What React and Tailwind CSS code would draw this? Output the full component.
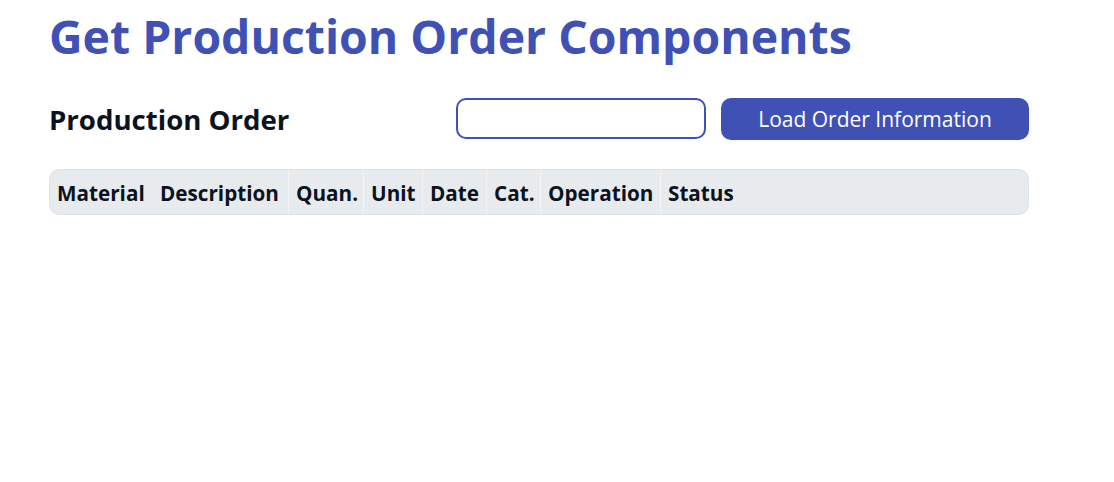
export default function App() {
  const cols = [
    ["Material", "w-[103px]"],
    ["Description", "w-[136px]"],
    ["Quan.", "w-[75px]"],
    ["Unit", "w-[59px]"],
    ["Date", "w-[64px]"],
    ["Cat.", "w-[54px]"],
    ["Operation", "w-[120px]"],
    ["Status", "flex-1"],
  ];
  return (
    <div className="min-h-screen bg-white px-[49px] pt-[5px]" style={{ fontFamily: '"Segoe UI", "Open Sans", sans-serif' }}>
      <div className="w-[980px]">
        <h1 className="text-[46.4px] font-bold leading-[62px] text-[#3f51b5]">Get Production Order Components</h1>
        <div className="mt-[30px] flex items-center">
          <div className="flex-1 pt-[2px] text-[27.6px] font-bold text-[#0b1320]">Production Order</div>
          <input className="h-[41px] w-[250px] rounded-[10px] border-2 border-[#3f51b5] bg-white outline-none" />
          <button className="ml-[15px] h-[42px] w-[308px] rounded-[10px] bg-[#3f51b5] pt-[3px] text-[21px] text-white">Load Order Information</button>
        </div>
        <div className="mt-[29px] flex h-[46px] items-stretch overflow-hidden rounded-[10px] border border-[#dfe3e8] bg-[#e8ebee]">
          {cols.map(([c, w], i) => (
            <div key={c} className={`flex shrink-0 items-center whitespace-nowrap pl-[7px] pt-[3px] text-[20.7px] font-bold text-[#0b1320] ${w} ${i < cols.length - 1 && i > 0 ? "border-r border-[#f3f4f6]" : ""}`}>
              {c}
            </div>
          ))}
        </div>
      </div>
    </div>
  );
}
